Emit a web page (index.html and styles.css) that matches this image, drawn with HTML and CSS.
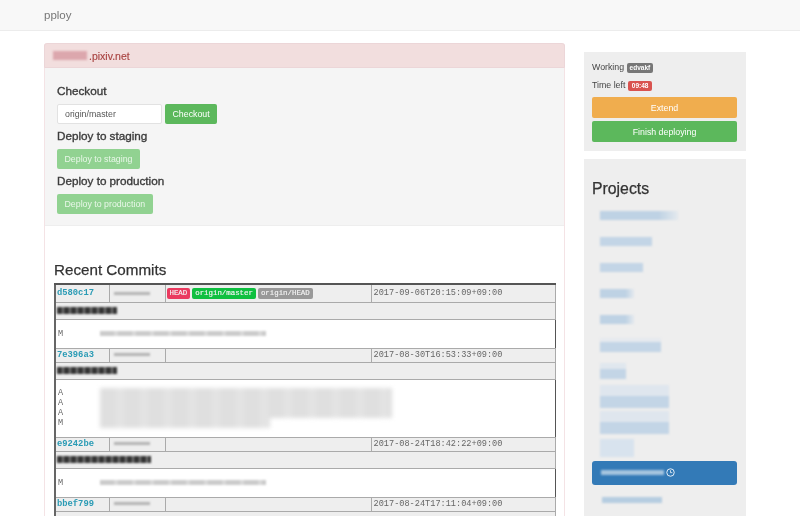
FILE: index.html
```html
<!DOCTYPE html>
<html lang="en">
<head>
<meta charset="utf-8">
<title>pploy</title>
<link rel="stylesheet" href="styles.css">
</head>
<body>
<header class="navbar"><a class="brand">pploy</a></header>
<div class="layout">
  <main class="panel">
    <div class="panel-heading"><span class="smudge host"></span>.pixiv.net</div>
    <section class="well actions">
      <h4>Checkout</h4>
      <div class="checkout-row">
        <input class="ref-input" value="origin/master">
        <button class="btn btn-success">Checkout</button>
      </div>
      <h4>Deploy to staging</h4>
      <button class="btn btn-muted">Deploy to staging</button>
      <h4>Deploy to production</h4>
      <button class="btn btn-muted">Deploy to production</button>
    </section>
    <section class="commits">
      <h3>Recent Commits</h3>
      <table class="commit-table">
        <colgroup><col class="c-hash"><col class="c-author"><col class="c-refs"><col class="c-date"></colgroup>
        <tbody>
          <tr class="r-meta r-tall">
            <td><a class="hash">d580c17</a></td>
            <td><span class="smudge author"></span></td>
            <td><span class="tag tag-red">HEAD</span><span class="tag tag-green">origin/master</span><span class="tag tag-gray">origin/HEAD</span></td>
            <td class="date">2017-09-06T20:15:09+09:00</td>
          </tr>
          <tr class="r-msg"><td colspan="4"><span class="smudge msg"></span></td></tr>
          <tr class="r-files"><td colspan="4"><div class="files"><div class="status">M</div><span class="smudge path"></span></div></td></tr>
          <tr class="r-meta">
            <td><a class="hash">7e396a3</a></td>
            <td><span class="smudge author"></span></td>
            <td></td>
            <td class="date">2017-08-30T16:53:33+09:00</td>
          </tr>
          <tr class="r-msg"><td colspan="4"><span class="smudge msg"></span></td></tr>
          <tr class="r-files r-files-big"><td colspan="4"><div class="files"><div class="status">A<br>A<br>A<br>M</div><span class="smudge paths"></span></div></td></tr>
          <tr class="r-meta">
            <td><a class="hash">e9242be</a></td>
            <td><span class="smudge author"></span></td>
            <td></td>
            <td class="date">2017-08-24T18:42:22+09:00</td>
          </tr>
          <tr class="r-msg"><td colspan="4"><span class="smudge msg msg-long"></span></td></tr>
          <tr class="r-files"><td colspan="4"><div class="files"><div class="status">M</div><span class="smudge path"></span></div></td></tr>
          <tr class="r-meta">
            <td><a class="hash">bbef799</a></td>
            <td><span class="smudge author"></span></td>
            <td></td>
            <td class="date">2017-08-24T17:11:04+09:00</td>
          </tr>
          <tr class="r-msg"><td colspan="4"></td></tr>
        </tbody>
      </table>
    </section>
  </main>
  <aside class="sidebar">
    <section class="side-well status-well">
      <div class="status-line">Working <span class="label label-gray">edvakf</span></div>
      <div class="status-line">Time left <span class="label label-red">09:48</span></div>
      <button class="btn btn-block btn-warning">Extend</button>
      <button class="btn btn-block btn-success">Finish deploying</button>
    </section>
    <section class="side-well projects">
      <h3>Projects</h3>
      <ul class="project-list">
        <li><span class="smudge p p1"></span></li>
        <li><span class="smudge p p2"></span></li>
        <li><span class="smudge p p3"></span></li>
        <li><span class="smudge p p4"></span></li>
        <li><span class="smudge p p4"></span></li>
        <li><span class="smudge p p5"></span></li>
        <li><span class="smudge p p6"></span></li>
        <li><span class="smudge p p7"></span></li>
        <li><span class="smudge p p7"></span></li>
        <li><span class="smudge p p8"></span></li>
        <li class="active"><span class="smudge active-name"></span>
          <svg class="clock" viewBox="0 0 12 12" width="9" height="9"><circle cx="6" cy="6" r="5" fill="none" stroke="#e8f0f8" stroke-width="1.3"/><path d="M6 3v3.2h2.4" fill="none" stroke="#e8f0f8" stroke-width="1.1"/></svg>
        </li>
        <li class="last"><span class="smudge p p9"></span></li>
      </ul>
    </section>
  </aside>
</div>
</body>
</html>
```
FILE: styles.css
```css
* { box-sizing: border-box; }
html, body { margin: 0; height: 516px; overflow: hidden; background: #fff; }
body { font-family: "Liberation Sans", Arial, sans-serif; font-size: 9.5px; color: #333; filter: blur(0.4px); }

.navbar { height: 31px; background: #f8f8f8; border-bottom: 1px solid #ececec; padding: 0 44px; display: flex; align-items: center; }
.brand { font-size: 11.5px; color: #777; }

.layout { display: grid; grid-template-columns: 521px 162px; column-gap: 19px; padding: 12px 0 0 44px; align-items: start; }

.panel { border: 1px solid #f4e3e5; border-top: 0; border-radius: 3px 3px 0 0; height: 480px; }
.panel-heading { height: 25px; margin: 0 -1px; background: #f2dede; border: 1px solid #ecd6d8; border-radius: 3px 3px 0 0; color: #a94442; font-size: 10.5px; -webkit-text-stroke: 0.15px #a94442; padding-left: 8px; display: flex; align-items: center; }

.well { background: #f5f5f5; border-bottom: 1px solid #eee; }
.actions { padding: 15px 12px 11px; display: flex; flex-direction: column; align-items: flex-start; }
h4 { margin: 0 0 5px; height: 16px; line-height: 16px; font-size: 11.7px; font-weight: 400; color: #3c3c3c; -webkit-text-stroke: 0.35px #3c3c3c; }
.actions .btn + h4, .checkout-row + h4 { margin-top: 4px; }
.checkout-row { display: flex; gap: 3px; }
.ref-input { width: 105px; height: 20px; border: 1px solid #e2e2e2; border-radius: 2px; background: #fff; font: 8.8px "Liberation Sans", Arial, sans-serif; color: #555; padding: 0 7px; }
.btn { height: 20px; border: 0; border-radius: 2px; font: 8.8px "Liberation Sans", Arial, sans-serif; color: #fff; padding: 0 7.5px; }
.btn-success { background: #5cb85c; }
.btn-muted { background: #91d291; color: #e9f7e9; }
.btn-warning { background: #f0ad4e; }
.btn-block { display: block; width: 100%; height: 21px; }

.commits { padding: 34px 9px 0; }
h3 { margin: 0 0 3px; height: 20px; line-height: 20px; font-size: 15.2px; font-weight: 400; color: #333; -webkit-text-stroke: 0.25px #333; }
.commit-table { width: 502px; table-layout: fixed; border-collapse: collapse; border-top: 2px solid #555; border-left: 2px solid #666; border-right: 1px solid #999; font-family: "Liberation Mono", monospace; font-size: 8.5px; line-height: 10px; color: #666; }
.c-hash { width: 54px; } .c-author { width: 56px; } .c-refs { width: 206px; }
.commit-table td { padding: 0 0 0 1px; border: 1px solid #aaa; background: #eee; overflow: hidden; white-space: nowrap; }
.r-meta { height: 14px; }
.r-meta.r-tall { height: 18px; }
.r-msg { height: 17px; }
.r-files { height: 29px; }
.r-files.r-files-big { height: 58px; }
.commit-table .r-files td { background: #fff; border-right: 1px solid #555; }
.hash { color: #2a9bb5; font-weight: 700; font-size: 8.8px; }
.date { font-size: 8.6px; }
.commit-table .date { padding-left: 2px; }
.tag { display: inline-block; height: 11px; line-height: 11px; padding: 0 3px; margin-right: 2px; border-radius: 2px; color: #f4f4f4; font-size: 7.4px; vertical-align: middle; -webkit-text-stroke: 0.15px #f4f4f4; }
.tag-red { background: #ea3a5f; }
.tag-green { background: #0fc040; }
.tag-gray { background: #999; }
.files { display: flex; gap: 36px; align-items: center; padding-left: 1px; }
.status { line-height: 10px; width: 6px; font-size: 8.5px; }

.smudge { display: inline-block; filter: blur(1.2px); vertical-align: middle; }
.host { width: 34px; height: 9px; background: #dca7ad; margin-right: 2px; }
.author { width: 36px; height: 3px; margin-left: 3px; background: #b4b4b4; }
.msg { width: 60px; height: 7px; background: repeating-linear-gradient(90deg, #333 0 5px, #777 5px 7px); }
.msg-long { width: 94px; }
.path { width: 166px; height: 5px; background: repeating-linear-gradient(90deg, #cbcbcb 0 14px, #d8d8d8 14px 18px); }
.paths { width: 305px; height: 40px; filter: blur(2px); background: repeating-linear-gradient(90deg, rgba(255,255,255,0) 0 16px, rgba(255,255,255,.15) 16px 24px), linear-gradient(#dfdfdf, #dfdfdf) 0 0 / 292px 30px no-repeat, linear-gradient(#dfdfdf, #dfdfdf) 0 30px / 170px 10px no-repeat; }

.side-well { background: #eee; padding: 6px 9px 6px 8px; }
.status-well { margin-top: 9px; height: 99px; }
.status-line { height: 18px; line-height: 18px; font-size: 8.8px; color: #444; }
.status-line + .btn { margin-top: 3px; }
.btn-block + .btn-block { margin-top: 3px; }
.label { display: inline-block; height: 10px; line-height: 10px; padding: 0 3px; border-radius: 2px; color: #fff; font-size: 6.5px; font-weight: 700; vertical-align: 0; }
.label-gray { background: #777; }
.label-red { background: #d9534f; padding: 0 4px; }

.projects { margin-top: 8px; height: 360px; padding-top: 20px; }
.projects h3 { margin-bottom: 4px; font-size: 15.8px; }
.project-list { list-style: none; margin: 0; padding: 0; }
.project-list li { height: 25.8px; padding-left: 8px; display: flex; align-items: center; }
.project-list .active { height: 24px; background: #337ab7; border-radius: 3px; padding-left: 9px; gap: 2px; }
.project-list .last { height: 30px; padding-left: 10px; }
.clock { display: block; }
.p { height: 9px; background: #c3d5e6; }
.p1 { width: 78px; background: linear-gradient(90deg, #bed2e4 0 75%, #e4e9ee 100%); }
.p2 { width: 52px; }
.p3 { width: 43px; }
.p4 { width: 34px; background: linear-gradient(90deg, #bed2e4 0 75%, #e4e9ee 100%); }
.p5 { width: 61px; height: 14px; background: linear-gradient(#e6eaef 0 30%, #c3d5e6 30%); }
.p6 { width: 26px; height: 16px; background: linear-gradient(#e0e7ee 0 40%, #c3d5e6 40%); }
.p7 { width: 69px; height: 23px; background: linear-gradient(#dfe6ee 0 50%, #c3d5e6 50%); }
.p8 { width: 34px; height: 18px; background: #d8e3ee; }
.p9 { width: 60px; height: 6px; background: #b6cde1; }
.active-name { width: 63px; height: 5px; background: #a5c4df; }
```
